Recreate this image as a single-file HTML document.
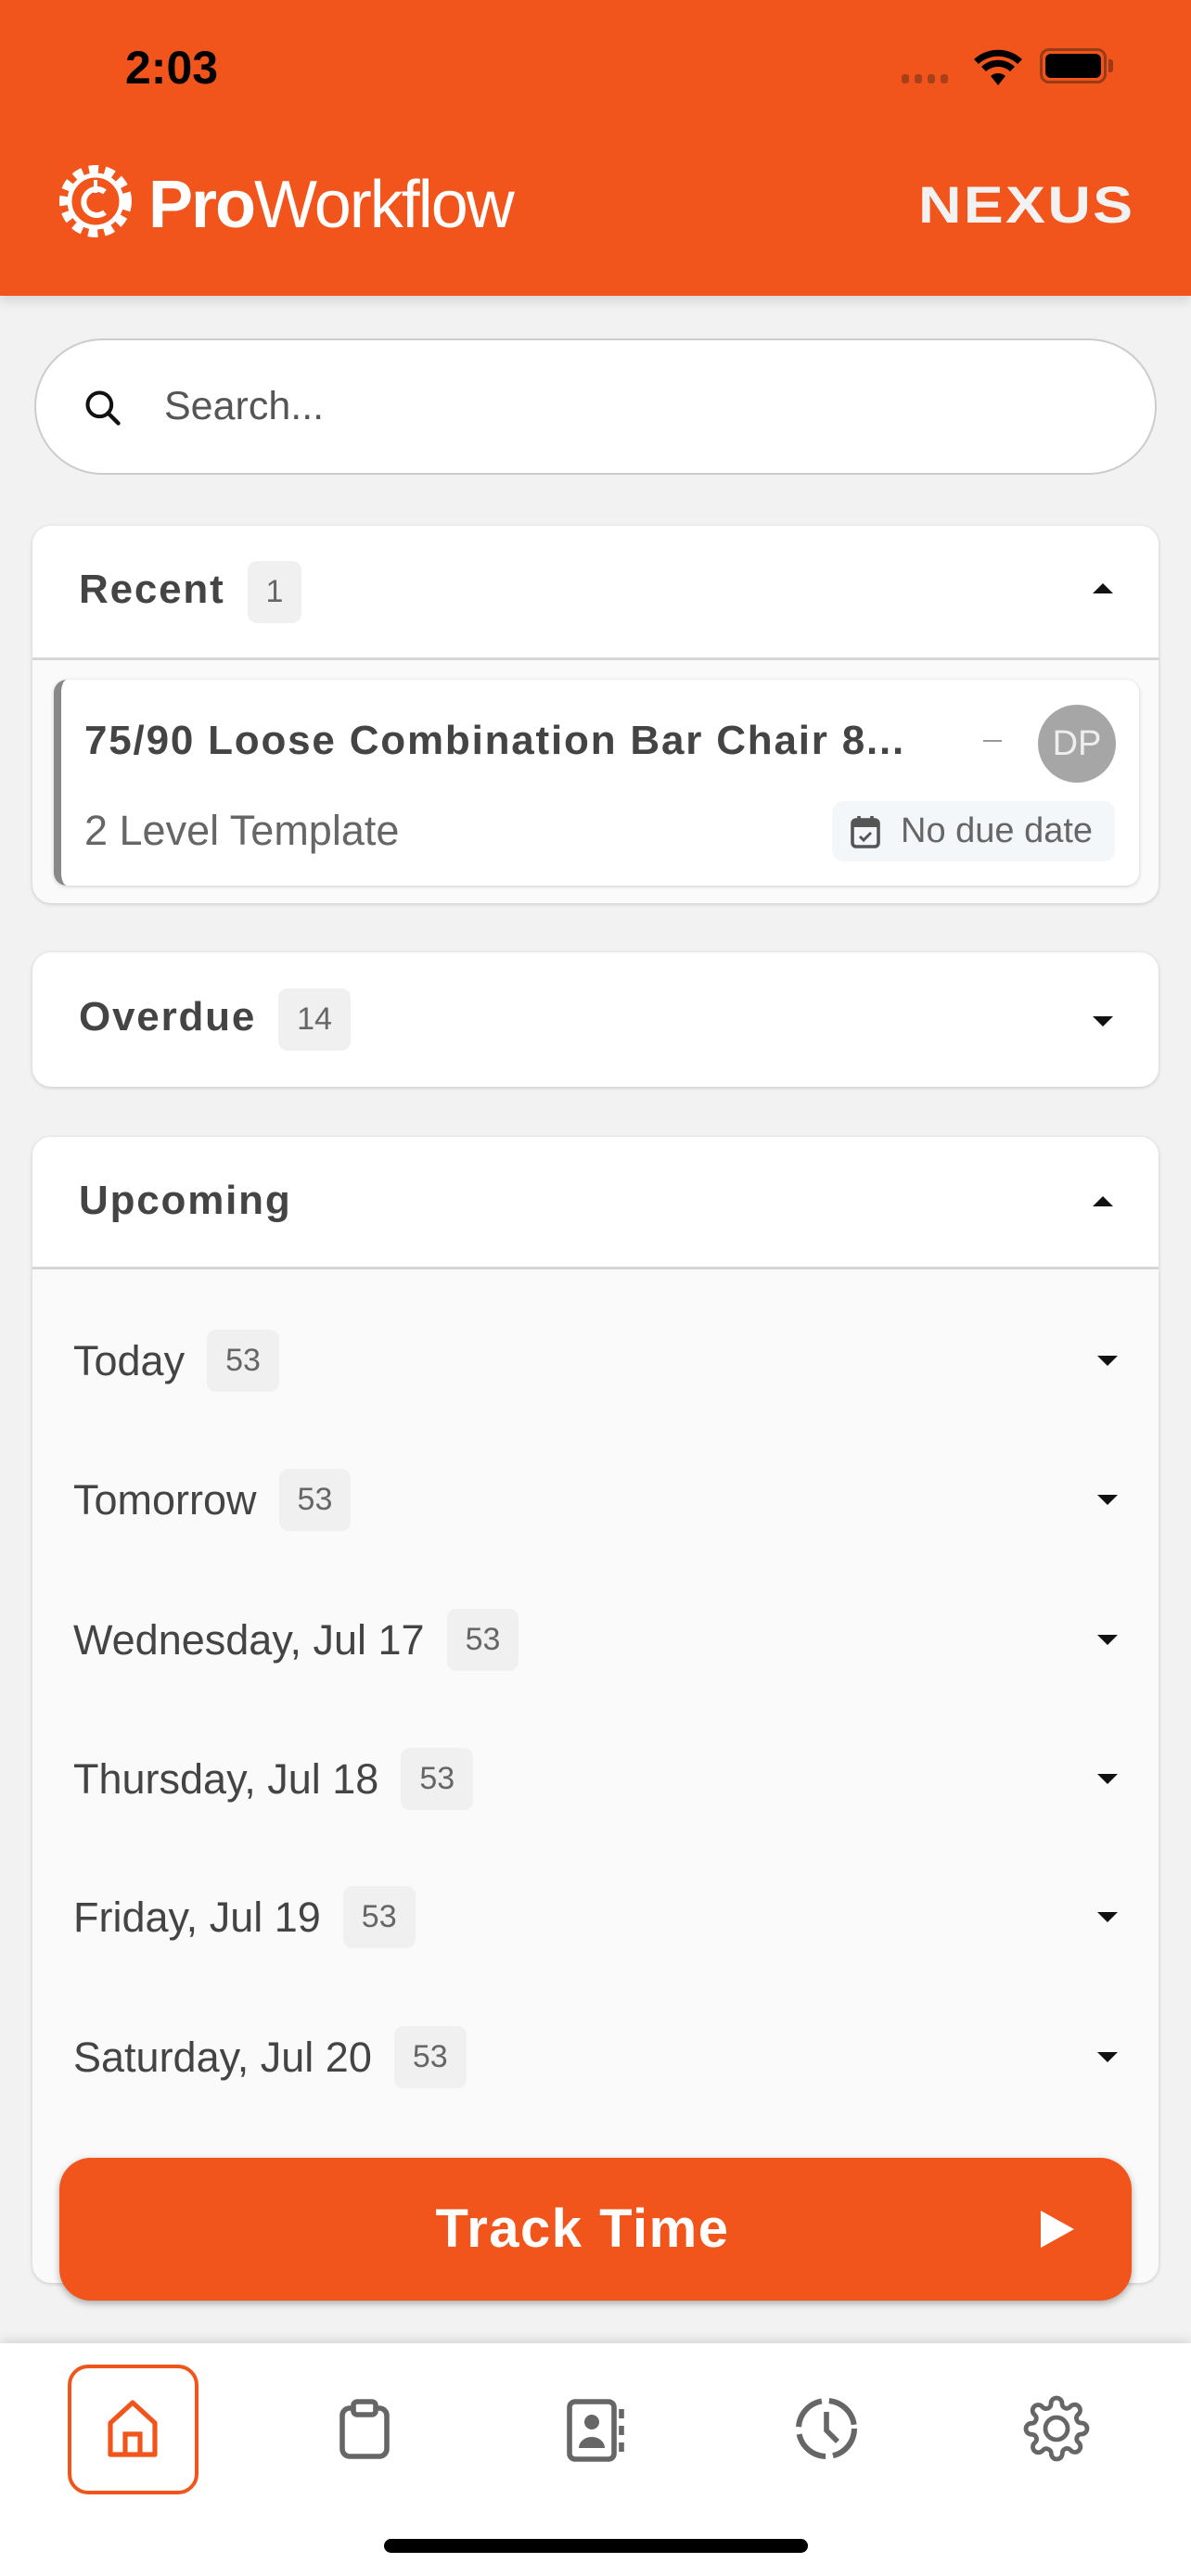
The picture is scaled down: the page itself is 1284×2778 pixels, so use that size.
<!DOCTYPE html>
<html><head><meta charset="utf-8"><style>
*{margin:0;padding:0;box-sizing:border-box}
body{width:1284px;height:2778px;background:#f2f2f2;font-family:"Liberation Sans",sans-serif;position:relative;overflow:hidden;color:#333}
.abs{position:absolute}
.hdr{left:0;top:0;width:1284px;height:319px;background:#f2551c;box-shadow:0 6px 12px rgba(0,0,0,.12)}
.card{background:#fff;border-radius:20px;box-shadow:0 1px 4px rgba(0,0,0,.18);left:35px;width:1214px}
.h{font-weight:bold;font-size:44px;color:#444;letter-spacing:1.8px}
.badge{display:inline-block;background:#f0f0f0;border-radius:10px;color:#666;font-size:34px;padding:14px 20px;vertical-align:middle;margin-left:24px;font-weight:normal;letter-spacing:0}
.row{left:44px;font-size:45px;color:#444;display:flex;align-items:center}
.caret{width:0;height:0;border-left:11px solid transparent;border-right:11px solid transparent}
.dn{border-top:11px solid #111}.up{border-bottom:11px solid #111}
</style></head><body>
<div class="abs hdr"></div>
<div class="abs" style="left:135px;top:44px;font-size:50px;font-weight:bold;color:#000">2:03</div>
<div class="abs" style="left:972px;top:80px;display:flex;gap:6px"><i style="width:8px;height:10px;background:#a8401a;border-radius:3px"></i><i style="width:8px;height:10px;background:#a8401a;border-radius:3px"></i><i style="width:8px;height:10px;background:#a8401a;border-radius:3px"></i><i style="width:8px;height:10px;background:#a8401a;border-radius:3px"></i></div>
<svg class="abs" style="left:1048px;top:52px" width="56" height="42" viewBox="0 0 28 21"><path d="M14 20 L10 15 A6 6 0 0 1 18 15Z M5 10 A13 13 0 0 1 23 10 L20.5 12.5 A9.5 9.5 0 0 0 7.5 12.5Z M1 6 A19 19 0 0 1 27 6 L24.5 8.5 A15.5 15.5 0 0 0 3.5 8.5Z" fill="#000"/></svg>
<div class="abs" style="left:1121px;top:52px;width:72px;height:38px;border:3px solid #9a3a17;border-radius:10px;padding:3px"><div style="width:100%;height:100%;background:#000;border-radius:6px"></div></div>
<div class="abs" style="left:1195px;top:64px;width:5px;height:14px;background:#9a3a17;border-radius:0 3px 3px 0"></div>
<svg class="abs" style="left:58px;top:172px" width="90" height="90" viewBox="0 0 90 90"><circle cx="45" cy="45" r="34" fill="none" stroke="#fff" stroke-width="10" stroke-dasharray="10 7"/><circle cx="45" cy="45" r="28" fill="none" stroke="#fff" stroke-width="5"/><path d="M55 35 A14 14 0 1 0 55 57" fill="none" stroke="#fff" stroke-width="6"/><path d="M45 22 v14" stroke="#fff" stroke-width="4"/></svg>
<div class="abs" style="left:160px;top:180px;font-size:72px;color:#fff;letter-spacing:-2px"><b>Pro</b><span style="font-weight:300">Workflow</span></div>
<div class="abs" style="left:990px;top:188px;font-size:56px;color:#f2f2f2;font-weight:bold;letter-spacing:2px;transform:scaleX(1.15);transform-origin:left">NEXUS</div>

<div class="abs" style="left:37px;top:365px;width:1210px;height:147px;background:#fff;border:2px solid #ccc;border-radius:74px"></div>
<svg class="abs" style="left:89px;top:418px" width="44" height="44" viewBox="0 0 24 24"><circle cx="10" cy="10" r="7" fill="none" stroke="#111" stroke-width="2.2"/><path d="M15 15 L21 21" stroke="#111" stroke-width="2.4" stroke-linecap="round"/></svg>
<div class="abs" style="left:177px;top:414px;font-size:43px;color:#555">Search...</div>

<div class="abs card" style="top:567px;height:407px;background:#fafafa"></div>
<div class="abs" style="left:35px;top:567px;width:1214px;height:145px;background:#fff;border-radius:20px 20px 0 0;border-bottom:3px solid #d6d6d6"></div>
<div class="abs h" style="left:85px;top:605px">Recent<span class="badge">1</span></div>
<div class="abs caret up" style="left:1178px;top:629px"></div>
<div class="abs" style="left:58px;top:733px;width:1170px;height:222px;background:#fff;border-radius:14px;box-shadow:0 1px 4px rgba(0,0,0,.18);border-left:8px solid #888"></div>
<div class="abs" style="left:91px;top:774px;font-size:44px;font-weight:bold;color:#444;letter-spacing:1.8px">75/90 Loose Combination Bar Chair 8...</div>
<div class="abs" style="left:1060px;top:798px;width:20px;height:2px;background:#999"></div>
<div class="abs" style="left:1119px;top:760px;width:84px;height:84px;border-radius:50%;background:#a6a6a6;color:#eee;font-size:38px;text-align:center;line-height:84px">DP</div>
<div class="abs" style="left:91px;top:870px;font-size:45px;color:#666">2 Level Template</div>
<div class="abs" style="left:897px;top:864px;width:305px;height:65px;background:#f4f7fa;border-radius:12px"></div>
<svg class="abs" style="left:916px;top:878px" width="34" height="38" viewBox="0 0 17 19"><rect x="1.5" y="3" width="14" height="14.5" rx="2" fill="none" stroke="#555" stroke-width="1.8"/><rect x="1.5" y="3" width="14" height="4" fill="#555"/><path d="M5 1v4M12 1v4" stroke="#555" stroke-width="1.8"/><path d="M5.5 12l2 2 4-4" fill="none" stroke="#555" stroke-width="1.5"/></svg>
<div class="abs" style="left:971px;top:875px;font-size:38px;color:#666">No due date</div>

<div class="abs card" style="top:1027px;height:145px"></div>
<div class="abs h" style="left:85px;top:1066px">Overdue<span class="badge">14</span></div>
<div class="abs caret dn" style="left:1178px;top:1096px"></div>

<div class="abs card" style="top:1226px;height:1236px;background:#fafafa"></div>
<div class="abs" style="left:35px;top:1226px;width:1214px;height:143px;background:#fff;border-radius:20px 20px 0 0;border-bottom:3px solid #d6d6d6"></div>
<div class="abs h" style="left:85px;top:1270px">Upcoming</div>
<div class="abs caret up" style="left:1178px;top:1290px"></div>

<div class="abs row" style="top:1434px;left:79px">Today<span class="badge">53</span></div>
<div class="abs row" style="top:1584px;left:79px">Tomorrow<span class="badge">53</span></div>
<div class="abs row" style="top:1735px;left:79px">Wednesday, Jul 17<span class="badge">53</span></div>
<div class="abs row" style="top:1885px;left:79px">Thursday, Jul 18<span class="badge">53</span></div>
<div class="abs row" style="top:2034px;left:79px">Friday, Jul 19<span class="badge">53</span></div>
<div class="abs row" style="top:2185px;left:79px">Saturday, Jul 20<span class="badge">53</span></div>
<div class="abs caret dn" style="left:1183px;top:1462px"></div>
<div class="abs caret dn" style="left:1183px;top:1612px"></div>
<div class="abs caret dn" style="left:1183px;top:1763px"></div>
<div class="abs caret dn" style="left:1183px;top:1913px"></div>
<div class="abs caret dn" style="left:1183px;top:2062px"></div>
<div class="abs caret dn" style="left:1183px;top:2213px"></div>

<div class="abs" style="left:64px;top:2327px;width:1156px;height:154px;background:#f2551c;border-radius:34px;box-shadow:0 3px 8px rgba(0,0,0,.3)"></div>
<div class="abs" style="left:-14px;width:1284px;top:2370px;text-align:center;font-size:58px;font-weight:bold;color:#fff;letter-spacing:1.5px">Track Time</div>
<div class="abs" style="left:1122px;top:2384px;width:0;height:0;border-top:20px solid transparent;border-bottom:20px solid transparent;border-left:36px solid #fff"></div>

<div class="abs" style="left:0;top:2527px;width:1284px;height:251px;background:#fff;box-shadow:0 -4px 10px rgba(0,0,0,.1)"></div>
<div class="abs" style="left:73px;top:2550px;width:141px;height:140px;border:4px solid #f2551c;border-radius:22px"></div>
<svg class="abs" style="left:113px;top:2587px" width="60" height="66" viewBox="0 0 30 33"><path d="M3 13 L15 2 L27 13 V30 H3Z" fill="none" stroke="#f2551c" stroke-width="2.6" stroke-linejoin="round"/><path d="M11 30 V19 H19 V30" fill="none" stroke="#f2551c" stroke-width="2.6"/></svg>
<svg class="abs" style="left:363px;top:2587px" width="60" height="66" viewBox="0 0 30 33"><rect x="3" y="5" width="24" height="26" rx="4" fill="none" stroke="#666" stroke-width="2.8"/><rect x="9" y="1.5" width="12" height="7" rx="2" fill="#fff" stroke="#666" stroke-width="2.8"/></svg>
<svg class="abs" style="left:608px;top:2586px" width="70" height="70" viewBox="0 0 35 35"><rect x="3" y="2" width="24" height="31" rx="3" fill="none" stroke="#666" stroke-width="2.8"/><circle cx="15" cy="13" r="4" fill="#666"/><path d="M8 27 a7 6 0 0 1 14 0Z" fill="#666"/><path d="M31 6v5M31 15v5M31 24v5" stroke="#666" stroke-width="2.8"/></svg>
<svg class="abs" style="left:855px;top:2583px" width="72" height="72" viewBox="0 0 36 36"><circle cx="18" cy="18" r="15" fill="none" stroke="#666" stroke-width="3" stroke-dasharray="20 4"/><path d="M18 9v10l6 6" fill="none" stroke="#666" stroke-width="2.8"/></svg>
<svg class="abs" style="left:1103px;top:2583px" width="72" height="72" viewBox="0 0 24 24"><path d="M12 8a4 4 0 1 0 0 8 4 4 0 0 0 0-8z" fill="none" stroke="#666" stroke-width="1.6"/><path d="M19.4 15a1.7 1.7 0 0 0 .3 1.8l.1.1a2 2 0 1 1-2.8 2.8l-.1-.1a1.7 1.7 0 0 0-1.8-.3 1.7 1.7 0 0 0-1 1.5V21a2 2 0 1 1-4 0v-.1a1.7 1.7 0 0 0-1.1-1.5 1.7 1.7 0 0 0-1.800.3l-.1.1a2 2 0 1 1-2.8-2.8l.1-.1a1.7 1.7 0 0 0 .3-1.8 1.7 1.7 0 0 0-1.5-1H3a2 2 0 1 1 0-4h.1a1.7 1.7 0 0 0 1.5-1.1 1.7 1.7 0 0 0-.3-1.8l-.1-.1a2 2 0 1 1 2.8-2.8l.1.1a1.7 1.7 0 0 0 1.8.3H9a1.7 1.7 0 0 0 1-1.5V3a2 2 0 1 1 4 0v.1a1.7 1.7 0 0 0 1 1.5 1.7 1.7 0 0 0 1.8-.3l.1-.1a2 2 0 1 1 2.8 2.8l-.1.1a1.7 1.7 0 0 0-.3 1.8V9a1.7 1.7 0 0 0 1.5 1H21a2 2 0 1 1 0 4h-.1a1.7 1.7 0 0 0-1.5 1z" fill="none" stroke="#666" stroke-width="1.6"/></svg>
<div class="abs" style="left:414px;top:2738px;width:457px;height:15px;background:#000;border-radius:8px"></div>
</body></html>
